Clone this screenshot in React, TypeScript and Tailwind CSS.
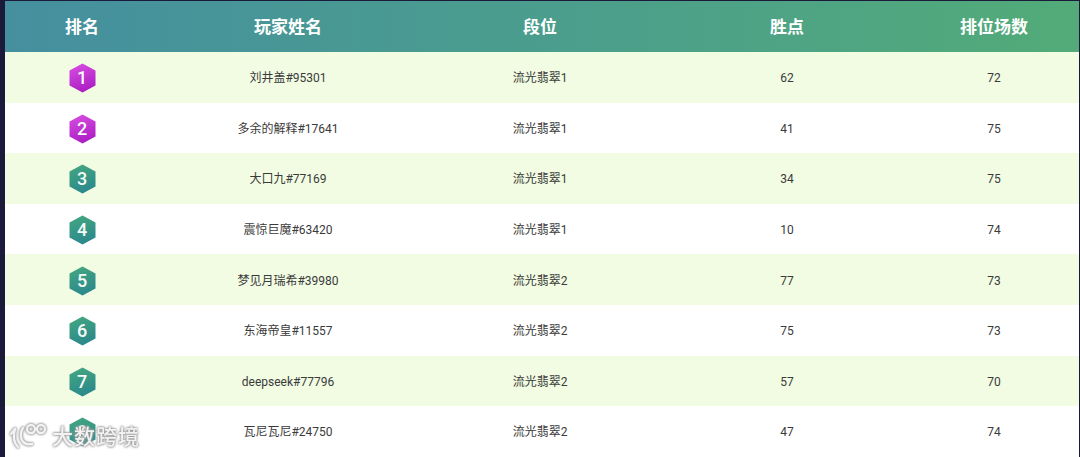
const rows = [
  ["刘井盖#95301", "流光翡翠1", "62", "72"],
  ["多余的解释#17641", "流光翡翠1", "41", "75"],
  ["大口九#77169", "流光翡翠1", "34", "75"],
  ["震惊巨魔#63420", "流光翡翠1", "10", "74"],
  ["梦见月瑞希#39980", "流光翡翠2", "77", "73"],
  ["东海帝皇#11557", "流光翡翠2", "75", "73"],
  ["deepseek#77796", "流光翡翠2", "57", "70"],
  ["瓦尼瓦尼#24750", "流光翡翠2", "47", "74"],
];

const cols = "grid grid-cols-[154px_258px_246px_248px_166px]";

function Hex({ n }: { n: number }) {
  const top = n <= 2;
  const id = `hex${n}`;
  return (
    <div className="relative w-[27px] h-[30px] flex items-center justify-center">
      <svg width="27" height="30" viewBox="0 0 27 30" className="absolute inset-0">
        <defs>
          <linearGradient id={id} x1="0.3" y1="0" x2="0.6" y2="1">
            <stop offset="0" stopColor={top ? "#d64ce0" : "#43a680"} />
            <stop offset="1" stopColor={top ? "#aa1cc2" : "#2a878d"} />
          </linearGradient>
        </defs>
        <polygon points="13.5,0.5 26.5,7.5 26.5,22.5 13.5,29.5 0.5,22.5 0.5,7.5" fill={`url(#${id})`} />
      </svg>
      <span className="relative text-[#f4fbf8] text-[18px] font-medium leading-none font-['Roboto',sans-serif]">{n}</span>
    </div>
  );
}

export default function App() {
  return (
    <div className="relative w-[1080px] h-[457px] overflow-hidden bg-[#1c1a3a] pl-[5px] pr-[1px] pt-[1px] font-['Roboto','Noto_Sans_CJK_SC',sans-serif]">
      <div className={`${cols} h-[51px] pt-[3px] items-center bg-gradient-to-r from-[#458f9f] to-[#52ab78] text-white text-[17px] font-bold text-center`}>
        <div>排名</div>
        <div>玩家姓名</div>
        <div>段位</div>
        <div>胜点</div>
        <div>排位场数</div>
      </div>
      {rows.map((r, i) => (
        <div
          key={i}
          className={`${cols} h-[50.6px] pt-[2px] items-center text-center text-[12px] text-[#3a3a3a] ${i % 2 === 0 ? "bg-[#f1fce3]" : "bg-white"}`}
        >
          <div className="flex justify-center"><Hex n={i + 1} /></div>
          <div>{r[0]}</div>
          <div>{r[1]}</div>
          <div>{r[2]}</div>
          <div>{r[3]}</div>
        </div>
      ))}
      <div className="absolute left-[10px] top-[422px] flex items-center gap-[4px] text-[#f2f2f2] [filter:drop-shadow(0_0_1px_#8a8a8a)_drop-shadow(0_0_1px_#b0b0b0)]">
        <svg width="38" height="28" viewBox="0 0 38 28" fill="none" stroke="#f2f2f2" strokeWidth="2.4" strokeLinecap="round">
          <path d="M5 7 L1 12" />
          <path d="M5 7 C3 14 4 21 8 25" />
          <path d="M13 6 C9 12 10 24 22 22" />
          <circle cx="21" cy="7" r="4" />
          <circle cx="31" cy="7" r="4" />
        </svg>
        <span className="text-[21px] font-medium tracking-[1px] leading-none mt-[2px]">大数跨境</span>
      </div>
    </div>
  );
}
